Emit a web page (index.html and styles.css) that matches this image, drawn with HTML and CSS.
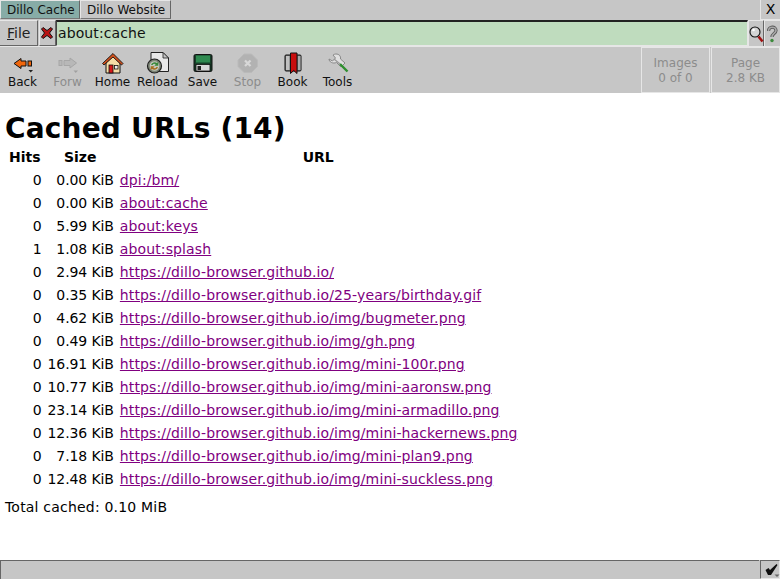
FILE: index.html
```html
<!DOCTYPE html>
<html lang="en">
<head>
<meta charset="utf-8">
<title>Dillo Cache</title>
<link rel="stylesheet" href="styles.css">
</head>
<body>
<div class="window">
  <div class="tabbar">
    <div class="tab tab-active">Dillo Cache</div>
    <div class="tab tab-plain">Dillo Website</div>
    <div class="spacer"></div>
    <div class="close">X</div>
  </div>
  <div class="locbar">
    <div class="filebtn"><span class="ul">F</span>ile</div>
    <div class="clearbtn"><svg width="12" height="12" viewBox="0 0 12 12"><path d="M2 0.500 L6 3.500 L10 0.500 L11.500 2 L8.500 6 L11.500 10 L10 11.500 L6 8.500 L2 11.500 L0.500 10 L3.500 6 L0.500 2 Z" fill="#b81414" stroke="#111" stroke-width="1"/></svg></div>
    <div class="urlbox">about:cache</div>
    <div class="iconbtn searchbtn"><svg width="15" height="20" viewBox="0 0 15 20"><circle cx="6" cy="8" r="5" fill="#d4d4d4" stroke="#111" stroke-width="1.100"/><circle cx="4.500" cy="6" r="1.300" fill="#fff"/><path d="M9.500 12.500 L13.500 17.500" stroke="#a01010" stroke-width="2.600"/></svg></div>
    <div class="iconbtn helpbtn"><svg width="12" height="20" viewBox="0 0 12 20"><path d="M1.500 7 C1.500 2 9 2 9 6.500 C9 9.500 5 9.500 5 13" fill="none" stroke="#555" stroke-width="3.200"/><path d="M1.500 7 C1.500 2 9 2 9 6.500 C9 9.500 5 9.500 5 13" fill="none" stroke="#a8a8a8" stroke-width="1.600"/><circle cx="5" cy="16.500" r="1.700" fill="#3c8a3c"/></svg></div>
  </div>
  <div class="toolbar">
    <div class="tool tool-back">
      <svg width="24" height="24" viewBox="0 0 24 24"><path d="M3 13.500 L10 8.500 V11 H15 V16 H10 V18.500 Z" fill="#f0660c" stroke="#111" stroke-width="1"/><rect x="17" y="11" width="3.500" height="5" fill="#f0660c" stroke="#111" stroke-width="1"/><path d="M17.500 20 H22 L19.750 22.500 Z" fill="#222"/></svg>
      <span>Back</span>
    </div>
    <div class="tool tool-off">
      <svg width="24" height="24" viewBox="0 0 24 24"><rect x="3" y="10.500" width="3" height="5" fill="#b8b8b8" stroke="#a6a6a6" stroke-width="1"/><path d="M20.500 13 L14 8 V10.500 H8 V15.500 H14 V18 Z" fill="#b8b8b8" stroke="#a6a6a6" stroke-width="1"/><path d="M17.500 20.500 H22 L19.750 23 Z" fill="#a0a0a0"/></svg>
      <span>Forw</span>
    </div>
    <div class="tool">
      <svg width="24" height="24" viewBox="0 0 24 24"><path d="M5 13 V23 H19 V13 L12 6 Z" fill="#f6dda6" stroke="#111" stroke-width="1"/><path d="M1.500 13.500 L12 3.500 L22 13.500 L20.500 15 L12 7 L3 15 Z" fill="#d0501c" stroke="#111" stroke-width="0.900"/><rect x="8" y="15" width="4" height="8" fill="#d81818" stroke="#111" stroke-width="0.800"/><rect x="13.500" y="15.500" width="3.500" height="3.500" fill="#eee" stroke="#111" stroke-width="0.800"/></svg>
      <span>Home</span>
    </div>
    <div class="tool">
      <svg width="24" height="24" viewBox="0 0 24 24"><path d="M5 2.500 H17 L22.500 8 V21.500 H5 Z" fill="#e8e8e8" stroke="#222" stroke-width="1"/><path d="M17 2.500 V8 H22.500 Z" fill="#c4c4c4" stroke="#222" stroke-width="0.800"/><circle cx="8.500" cy="16" r="7" fill="#7c8474" stroke="#222" stroke-width="1.200"/><circle cx="8.500" cy="16" r="4.800" fill="#c4c8bc"/><path d="M5 15 A3.800 3.800 0 0 1 11 13 L12.300 11.800 V15.800 H8.300 L9.700 14.400 A2 2 0 0 0 6.600 15 Z" fill="#3a8a3a"/><path d="M12 17 A3.800 3.800 0 0 1 6 19 L4.700 20.200 V16.200 H8.700 L7.300 17.600 A2 2 0 0 0 10.400 17 Z" fill="#a87020"/></svg>
      <span>Reload</span>
    </div>
    <div class="tool">
      <svg width="24" height="24" viewBox="0 0 24 24"><rect x="3" y="4.500" width="18" height="17" rx="1.500" fill="#173f28" stroke="#111" stroke-width="1"/><rect x="5" y="5.500" width="14" height="7" fill="#2f8a50"/><rect x="5" y="14.500" width="14" height="6.500" fill="#d8d8d8" stroke="#111" stroke-width="0.800"/><rect x="6.500" y="16" width="3.500" height="4" fill="#222"/></svg>
      <span>Save</span>
    </div>
    <div class="tool tool-off">
      <svg width="24" height="24" viewBox="0 0 24 24"><path d="M8 4 H15.500 L21.500 10 V16.500 L15.500 22.500 H8 L2 16.500 V10 Z" fill="#b2b2b2" stroke="#bababa" stroke-width="1"/><path d="M9 10.500 L14.500 16 M14.500 10.500 L9 16" stroke="#d8d8d8" stroke-width="2.200"/></svg>
      <span>Stop</span>
    </div>
    <div class="tool">
      <svg width="24" height="24" viewBox="0 0 24 24"><rect x="4" y="5" width="16" height="16" rx="1" fill="#707070" stroke="#111" stroke-width="1"/><rect x="5" y="6" width="3.500" height="14" fill="#c0c0c0"/><rect x="17" y="6" width="2.500" height="14" fill="#a8a8a8"/><path d="M9.500 3 H16 V23.500 L12.750 20.500 L9.500 23.500 Z" fill="#c80c0c" stroke="#111" stroke-width="1"/></svg>
      <span>Book</span>
    </div>
    <div class="tool">
      <svg width="24" height="24" viewBox="0 0 24 24"><path d="M10 4 C13 4 15 6 14.500 9 L19 13 L15 17 L10.500 12.500 C7 14 3 12 3 9 L6.500 11 L9.500 8 L7 5 C7.500 4.500 9 4 10 4 Z" fill="#e0e0e0" stroke="#888" stroke-width="1"/><path d="M14 14 L21.500 21.500" stroke="#2f8f2f" stroke-width="2.400"/><path d="M8 9 L14 14" stroke="#9a9a9a" stroke-width="1.400"/></svg>
      <span>Tools</span>
    </div>
    <div class="spacer"></div>
    <div class="meter meter-images">Images<br>0 of 0</div>
    <div class="meter">Page<br>2.8 KB</div>
  </div>
  <main class="content">
    <h1>Cached URLs (14)</h1>
    <table class="cache">
      <thead>
        <tr><th>Hits</th><th>Size</th><th>URL</th></tr>
      </thead>
      <tbody>
        <tr><td class="num">0</td><td class="num">0.00 KiB</td><td><a href="#">dpi:/bm/</a></td></tr>
        <tr><td class="num">0</td><td class="num">0.00 KiB</td><td><a href="#">about:cache</a></td></tr>
        <tr><td class="num">0</td><td class="num">5.99 KiB</td><td><a href="#">about:keys</a></td></tr>
        <tr><td class="num">1</td><td class="num">1.08 KiB</td><td><a href="#">about:splash</a></td></tr>
        <tr><td class="num">0</td><td class="num">2.94 KiB</td><td><a href="#">https://dillo-browser.github.io/</a></td></tr>
        <tr><td class="num">0</td><td class="num">0.35 KiB</td><td><a href="#">https://dillo-browser.github.io/25-years/birthday.gif</a></td></tr>
        <tr><td class="num">0</td><td class="num">4.62 KiB</td><td><a href="#">https://dillo-browser.github.io/img/bugmeter.png</a></td></tr>
        <tr><td class="num">0</td><td class="num">0.49 KiB</td><td><a href="#">https://dillo-browser.github.io/img/gh.png</a></td></tr>
        <tr><td class="num">0</td><td class="num">16.91 KiB</td><td><a href="#">https://dillo-browser.github.io/img/mini-100r.png</a></td></tr>
        <tr><td class="num">0</td><td class="num">10.77 KiB</td><td><a href="#">https://dillo-browser.github.io/img/mini-aaronsw.png</a></td></tr>
        <tr><td class="num">0</td><td class="num">23.14 KiB</td><td><a href="#">https://dillo-browser.github.io/img/mini-armadillo.png</a></td></tr>
        <tr><td class="num">0</td><td class="num">12.36 KiB</td><td><a href="#">https://dillo-browser.github.io/img/mini-hackernews.png</a></td></tr>
        <tr><td class="num">0</td><td class="num">7.18 KiB</td><td><a href="#">https://dillo-browser.github.io/img/mini-plan9.png</a></td></tr>
        <tr><td class="num">0</td><td class="num">12.48 KiB</td><td><a href="#">https://dillo-browser.github.io/img/mini-suckless.png</a></td></tr>
      </tbody>
    </table>
    <p class="total">Total cached: 0.10 MiB</p>
  </main>
  <div class="statusbar">
    <div class="status-text"></div>
    <div class="status-btn"><svg width="18" height="16" viewBox="0 0 18 16"><path d="M3.500 8 L6.500 6 L8 8 L14.500 2 L15.500 3 L9 13 H6 Z" fill="#111"/><path d="M12.500 12.500 H17.500 L15 15 Z" fill="#666"/></svg></div>
  </div>
</div>
</body>
</html>
```
FILE: styles.css
```css
* { box-sizing: border-box; }
html, body { margin: 0; padding: 0; }
body {
  width: 780px;
  height: 580px;
  overflow: hidden;
  background: #fff;
  font-family: "DejaVu Sans", sans-serif;
  color: #000;
}
.window { display: flex; flex-direction: column; height: 580px; }
.spacer { flex: 1; }

.tabbar {
  display: flex;
  height: 20px;
  background: #c6c6c6;
  flex: none;
}
.tab {
  height: 19px;
  padding: 0 6px;
  font-size: 12px;
  line-height: 18px;
  color: #111;
  white-space: nowrap;
  background: #c6c6c6;
  border: 1px solid;
  border-color: #e6e6e6 #666 #777 #e6e6e6;
}
.tab-active { background: #87aca7; width: 80px; }
.tab-plain { width: 91px; }
.close {
  width: 20px;
  height: 20px;
  font-size: 14px;
  line-height: 18px;
  text-align: center;
  border-left: 1px solid #e6e6e6;
  border-bottom: 1px solid #e6e6e6;
}

.locbar {
  display: flex;
  height: 27px;
  flex: none;
  background: #c6c6c6;
  border-bottom: 1px solid #e6e6e6;
}
.filebtn {
  width: 38px;
  height: 26px;
  padding: 3px 0 0 7px;
  font-size: 14px;
  line-height: 19px;
  color: #222;
  border-top: 1px solid #e6e6e6;
  border-right: 1px solid #666;
  border-bottom: 1px solid #666;
}
.ul { text-decoration: underline; }
.clearbtn {
  width: 17px;
  height: 26px;
  margin-left: 1px;
  padding: 6px 0 0 1px;
  border-top: 1px solid #e6e6e6;
  border-left: 1px solid #e6e6e6;
  border-right: 1px solid #666;
  border-bottom: 1px solid #666;
}
.clearbtn svg { display: block; }
.urlbox {
  flex: 1;
  height: 26px;
  padding: 1px 0 0 1px;
  font-size: 14px;
  letter-spacing: 0.1px;
  line-height: 21px;
  color: #111;
  background: #bfdcbe;
  border-top: 2px solid #222;
  border-left: 1px solid #444;
  border-bottom: 1px solid #e6e6e6;
  border-right: 1px solid #e6e6e6;
}
.iconbtn {
  height: 26px;
  padding-top: 3px;
  border-top: 1px solid #e6e6e6;
  border-right: 1px solid #666;
}
.iconbtn svg { display: block; margin: 0 auto; }
.searchbtn { width: 16px; border-left: 1px solid #e6e6e6; }
.helpbtn { width: 16px; border-left: 1px solid #e6e6e6; border-right: 0; }

.toolbar {
  display: flex;
  height: 46px;
  flex: none;
  background: #c6c6c6;
}
.tool {
  width: 45px;
  padding-top: 3px;
  display: flex;
  flex-direction: column;
  align-items: center;
  font-size: 12px;
  line-height: 14px;
  color: #111;
}
.tool svg { display: block; height: 24px; flex: none; }
.tool span { display: block; margin-top: 1px; }
.tool-off { color: #8c8c8c; }
.meter {
  width: 69px;
  height: 46px;
  padding-top: 8px;
  margin-left: 1px;
  font-size: 12px;
  line-height: 15px;
  text-align: center;
  color: #8c8c8c;
  border: 1px solid #e6e6e6;
}
.meter-images { margin-left: 0; }

.content {
  flex: 1;
  min-height: 0;
  padding: 0 5px;
  background: #fff;
  font-size: 14px;
  overflow: hidden;
}
h1 {
  margin: 20px 0 0;
  font-size: 28px;
  line-height: 32px;
  font-weight: bold;
  letter-spacing: 0.18px;
}
.cache {
  border-collapse: separate;
  border-spacing: 0;
  margin-top: 2px;
  font-size: 14px;
}
.cache th { height: 22px; padding: 0 4px 2px; line-height: 17px; text-align: center; }
.cache th + th { padding-left: 3px; }
.cache td { height: 23px; padding: 0 3px; line-height: 17px; white-space: nowrap; }
.cache .num { text-align: right; }
.cache .num + .num { letter-spacing: -0.1px; }
.cache a { color: #800080; letter-spacing: 0.12px; }
.total { margin: 8px 0 0; line-height: 17px; letter-spacing: 0.2px; }

.statusbar {
  display: flex;
  height: 20px;
  flex: none;
  background: #c6c6c6;
  border-bottom: 1px solid #fff;
}
.status-text { flex: 1; border-top: 1px solid #666; border-left: 1px solid #666; }
.status-btn {
  width: 20px;
  border: 1px solid;
  border-color: #666 #e6e6e6 #e6e6e6 #666;
  margin-left: 1px;
}
.status-btn svg { display: block; margin: 1px 0 0 1px; }
```
